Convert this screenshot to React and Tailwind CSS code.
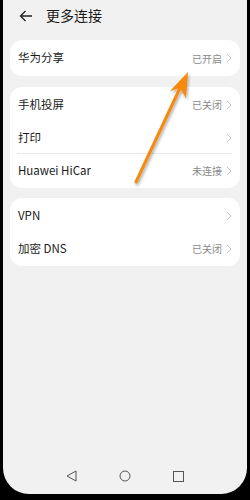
const font = { fontFamily: '"Noto Sans CJK SC", "Noto Sans", sans-serif' };

function Chevron() {
  return (
    <svg width="6" height="10" viewBox="0 0 6 10" className="ml-1">
      <path d="M1 1l4 4-4 4" fill="none" stroke="#c4c4c4" strokeWidth="1" />
    </svg>
  );
}

function Row({ label, value, divider }) {
  return (
    <div className="relative flex items-center justify-between h-[33px] px-[8px]">
      <span className="text-[11.5px] text-[#1a1a1a]">{label}</span>
      <span className="flex items-center text-[10px] text-[#8a8a8a]">
        {value}
        <Chevron />
      </span>
      {divider && <div className="absolute left-[7px] right-[8px] bottom-0 h-px bg-[#e6e6e6]" />}
    </div>
  );
}

export default function App() {
  return (
    <div className="relative w-[250px] h-[500px] bg-black overflow-hidden" style={font}>
      <div className="mx-[3px] h-[494px] bg-[#f1f1f1] rounded-b-[26px] flex flex-col">
        {/* header */}
        <div className="flex items-center h-[31px] pl-[16px]">
          <svg width="14" height="12" viewBox="0 0 14 12">
            <path d="M13 6H1.5M6.5 1L1.5 6l5 5" fill="none" stroke="#222" strokeWidth="1.3" />
          </svg>
          <span className="ml-[13px] text-[14px] text-[#1a1a1a]">更多连接</span>
        </div>

        {/* cards */}
        <div className="mx-[7px] mt-[9px] bg-white rounded-[12px] h-[36px] flex flex-col justify-center">
          <Row label="华为分享" value="已开启" />
        </div>
        <div className="mx-[7px] mt-[11px] bg-white rounded-[12px] py-[1px]">
          <Row label="手机投屏" value="已关闭" />
          <Row label="打印" value="" divider />
          <Row label="Huawei HiCar" value="未连接" />
        </div>
        <div className="mx-[7px] mt-[10px] bg-white rounded-[12px] py-[1px]">
          <Row label="VPN" value="" />
          <Row label="加密 DNS" value="已关闭" />
        </div>

        <div className="flex-1" />

        {/* nav bar */}
        <div className="flex items-center justify-center gap-[42px] h-[24px] mb-[6px]">
          <svg width="11" height="12" viewBox="0 0 11 12">
            <path d="M10 1v10L1 6z" fill="none" stroke="#555" strokeWidth="1" strokeLinejoin="round" />
          </svg>
          <svg width="12" height="12" viewBox="0 0 12 12">
            <circle cx="6" cy="6" r="5" fill="none" stroke="#555" strokeWidth="1" />
          </svg>
          <svg width="11" height="11" viewBox="0 0 11 11">
            <rect x="0.5" y="0.5" width="10" height="10" fill="none" stroke="#555" strokeWidth="1" />
          </svg>
        </div>
      </div>

      {/* annotation arrow */}
      <svg className="absolute left-0 top-0" width="250" height="500" viewBox="0 0 250 500">
        <defs>
          <filter id="sh" x="-20%" y="-20%" width="140%" height="140%">
            <feDropShadow dx="1" dy="2" stdDeviation="1.5" floodColor="#000" floodOpacity="0.35" />
          </filter>
        </defs>
        <g filter="url(#sh)">
          <line x1="136" y1="182" x2="180" y2="88" stroke="#f7890b" strokeWidth="3" strokeLinecap="round" />
          <path d="M188 72L186 98L180 88L170 91Z" fill="#f7890b" />
        </g>
      </svg>
    </div>
  );
}
